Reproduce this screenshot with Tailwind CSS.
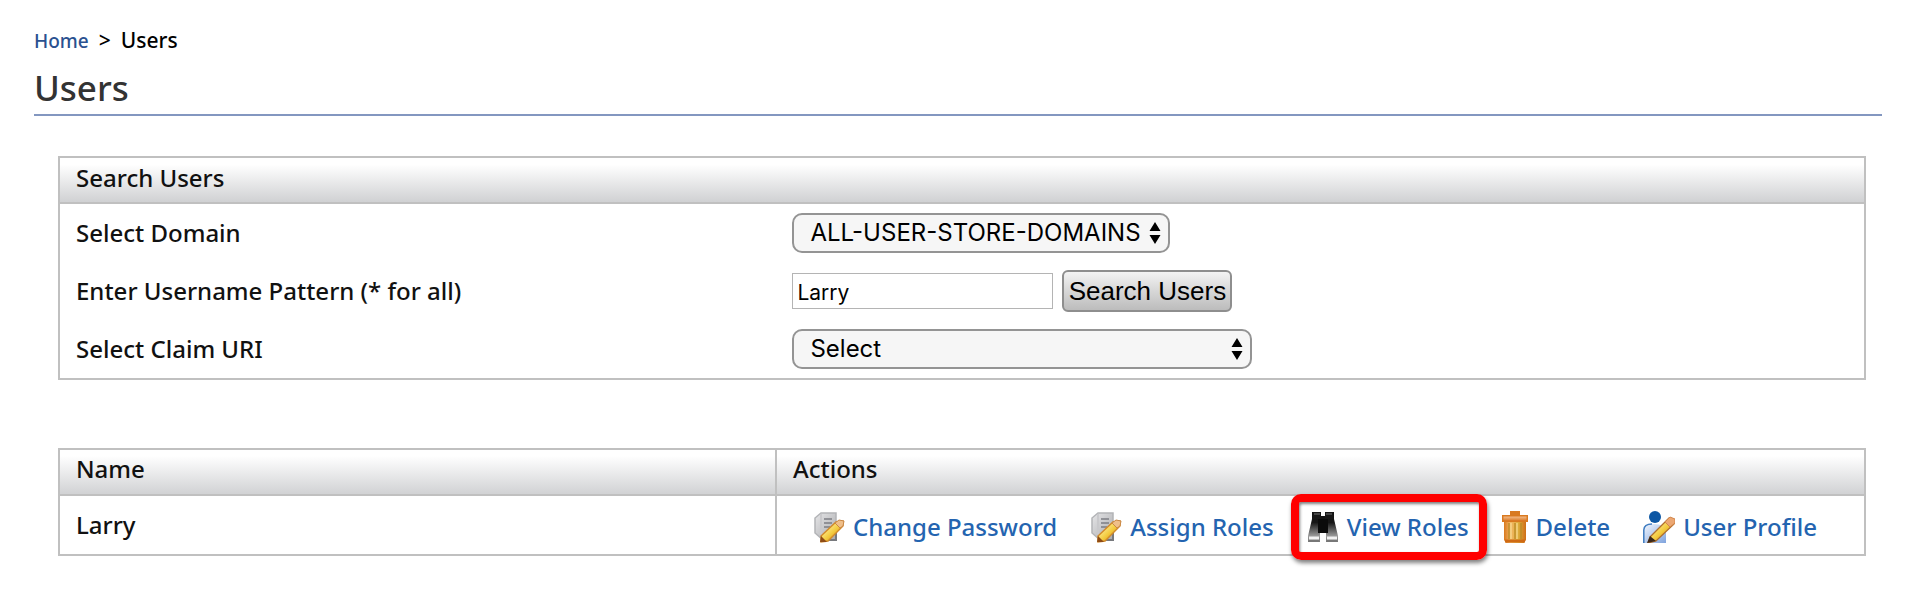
<!DOCTYPE html>
<html lang="en">
<head>
<meta charset="utf-8">
<meta name="viewport" content="width=device-width, initial-scale=1">
<title>Users</title>
<script src="https://cdn.jsdelivr.net/npm/@tailwindcss/browser@4"></script>
</head>
<body class="min-h-screen bg-white font-['Noto_Sans',sans-serif] text-2xl leading-8 font-medium text-[#111111]">
<svg class="absolute size-0" aria-hidden="true">
  <defs>
    <linearGradient id="paper" x1="0" x2="1" y2="1"><stop offset="0" stop-color="#e6e6e8"/><stop offset="1" stop-color="#a9aaad"/></linearGradient>
    <linearGradient id="pencil" x1="0" y1="0" x2="1" y2="1"><stop offset="0.2" stop-color="#fff3a0"/><stop offset="0.55" stop-color="#f3c93c"/><stop offset="0.9" stop-color="#c07818"/></linearGradient>
    <linearGradient id="barrel" x1="0" x2="0" y2="1"><stop offset="0" stop-color="#111"/><stop offset="0.35" stop-color="#161616"/><stop offset="0.8" stop-color="#9a9a9a"/><stop offset="1" stop-color="#777"/></linearGradient>
    <linearGradient id="bin" x1="0" x2="1"><stop offset="0" stop-color="#d9791f"/><stop offset="0.3" stop-color="#f3b765"/><stop offset="0.65" stop-color="#dcae3c"/><stop offset="1" stop-color="#cf6d16"/></linearGradient>
    <linearGradient id="lid" x1="0" x2="0" y2="1"><stop offset="0" stop-color="#f7c79a"/><stop offset="1" stop-color="#d8731c"/></linearGradient>
    <linearGradient id="shirt" x1="0" x2="1" y2="1"><stop offset="0" stop-color="#f4f8fe"/><stop offset="1" stop-color="#7fa3dd"/></linearGradient>
    <symbol id="edit" viewBox="0 0 32 32">
      <path d="M8 2H23V29H10L2 22V7Z" fill="url(#paper)" stroke="#b3b4b7" stroke-width="1.5"/>
      <path d="M8 3V22L11 28" fill="none" stroke="#c9c9cc" stroke-width="2"/>
      <path d="M11 8H19M11 12H19M11 16H17" stroke="#7c7e84" stroke-width="1.6"/>
      <path d="M23 18V29H15" fill="none" stroke="#77797d" stroke-width="2"/>
      <path d="M8 25L23 11L30 10L30 15L15 30L8 31Z" fill="url(#pencil)" stroke="#d28a2a" stroke-width="1.4"/>
      <path d="M22 12L26 9L31 10L30 15L27 17Z" fill="#efbf8a" stroke="#c98745"/>
      <path d="M8 25L14 31H7Z" fill="#8f4c16"/>
    </symbol>
    <symbol id="binoculars" viewBox="0 0 32 32">
      <path d="M5 1H14V5H18V1H27V8L31 25V31H19V21H13V31H1V25L5 8Z" fill="url(#barrel)"/>
      <path d="M6 1H14V8H6ZM18 1H26V8H18Z" fill="#171717"/>
      <path d="M7 3H13M19 3H25" stroke="#777" stroke-width="1.2"/>
      <path d="M11 8H21V22H11Z" fill="#0b0b0b"/>
      <path d="M2 27H12M20 27H30" stroke="#f2f2f2" stroke-width="3"/>
      <path d="M2 30H12M20 30H30" stroke="#777" stroke-width="2"/>
    </symbol>
    <symbol id="trash" viewBox="0 0 26 32">
      <path d="M8 0H18V4H8Z" fill="#d87a22"/>
      <path d="M2 10H24V29L22 32H4L2 29Z" fill="url(#bin)"/>
      <path d="M7 12V28M13 12V28M19 12V28" stroke="#b98a26" stroke-width="1.3"/>
      <path d="M9 12V28M15 12V28" stroke="#f6d98f" stroke-width="1.3"/>
      <path d="M3 30H23" stroke="#cf6a14" stroke-width="3"/>
      <path d="M0.7 4.7H25.3V10.3H0.7Z" fill="url(#lid)" stroke="#d9791f" stroke-width="1.4"/>
    </symbol>
    <symbol id="profile" viewBox="0 0 32 32">
      <path d="M0 32V19C1 13 6 13 11 13C18 13 23 16 23 22V32Z" fill="url(#shirt)"/>
      <path d="M0.8 32V19C1 14 5 13 9 13" fill="none" stroke="#3f7cc0" stroke-width="1.5"/>
      <circle cx="12" cy="6" r="6" fill="#0d57a4"/>
      <path d="M7 26L26 7L31 9L31 13L13 30L5 32Z" fill="url(#pencil)" stroke="#b06f2c" stroke-width="1.3"/>
      <path d="M22 11L27 6L32 8V12L27 16Z" fill="#eba773" stroke="#d2854a"/>
      <path d="M7 25L13 30L4 32Z" fill="#3a281c"/>
    </symbol>
    <symbol id="arrows" viewBox="0 0 12 22"><path d="M6 0L11.5 9H0.5ZM6 22L0.5 13H11.5Z" fill="#000"/></symbol>
  </defs>
</svg>

<div class="pt-6 pr-[30px] pb-8 pl-[34px]">
  <nav aria-label="Breadcrumb" class="flex items-baseline gap-2.5 text-[21px] text-black">
    <a href="#" class="text-[19px] text-[#2a5190]">Home</a><span>&gt;</span><span>Users</span>
  </nav>
  <h1 class="mt-2 border-b-2 border-[#8397c0] pb-[3px] text-[35px] leading-[46px] text-[#333333]">Users</h1>

  <main class="mt-10 mr-4 ml-6 space-y-[68px]">
    <form class="border-2 border-[#c0c0c0]" onsubmit="return false">
      <h2 class="h-[46px] border-b-2 border-[#c0c0c0] bg-linear-to-b from-white from-15% to-[#d0d1d3] px-4 pt-1">Search Users</h2>
      <div class="grid grid-cols-[40.6%_1fr] grid-rows-[57px_59px_58px] items-center">
        <label for="domain" class="pl-4">Select Domain</label>
        <div class="flex">
          <div class="relative">
            <select id="domain" class="h-10 w-[378px] appearance-none rounded-[10px] border-2 border-[#949494] bg-[#f6f6f6] pl-4 font-[Inter,sans-serif] text-2xl leading-8 font-normal text-black"><option>ALL-USER-STORE-DOMAINS</option></select>
            <svg class="pointer-events-none absolute top-[9px] right-[9px] h-[22px] w-3"><use href="#arrows"/></svg>
          </div>
        </div>
        <label for="pattern" class="pl-4">Enter Username Pattern (* for all)</label>
        <div class="flex items-center gap-[9px]">
          <input id="pattern" type="text" value="Larry" class="h-9 w-[261px] border border-[#b4b4b4] px-1 pt-1 font-[Inter,sans-serif] text-[21px] leading-8 font-normal text-black">
          <button type="submit" class="h-[42px] w-[170px] rounded-md border-2 border-[#8e8e8e] bg-linear-to-b from-[#f3f3f3] to-[#bcbcbc] text-center font-['Liberation_Sans',sans-serif] text-[26px] leading-9 font-normal whitespace-nowrap text-black">Search Users</button>
        </div>
        <label for="claim" class="pl-4">Select Claim URI</label>
        <div class="flex">
          <div class="relative">
            <select id="claim" class="h-10 w-[460px] appearance-none rounded-[10px] border-2 border-[#949494] bg-[#f6f6f6] pl-4 font-[Inter,sans-serif] text-2xl leading-8 font-normal text-black"><option>Select</option></select>
            <svg class="pointer-events-none absolute top-[9px] right-[9px] h-[22px] w-3"><use href="#arrows"/></svg>
          </div>
        </div>
      </div>
    </form>

    <table class="w-full border-collapse border-2 border-[#c0c0c0] text-left">
      <thead>
        <tr class="h-[46px] bg-linear-to-b from-white from-15% to-[#d0d1d3]">
          <th class="w-[39.7%] border-2 border-[#c0c0c0] px-4 pb-1.5 font-medium">Name</th>
          <th class="border-2 border-[#c0c0c0] px-4 pb-1.5 font-medium">Actions</th>
        </tr>
      </thead>
      <tbody>
        <tr class="h-[60px]">
          <td class="border-2 border-[#c0c0c0] px-4">Larry</td>
          <td class="border-2 border-[#c0c0c0] pt-1 pl-9">
            <div class="flex items-center gap-[33px] whitespace-nowrap text-[#2464b0]">
              <a href="#" class="flex items-center gap-2"><svg class="size-8"><use href="#edit"/></svg>Change Password</a>
              <a href="#" class="flex items-center gap-2"><svg class="size-8"><use href="#edit"/></svg>Assign Roles</a>
              <a href="#" class="relative flex items-center gap-2"><svg class="size-8"><use href="#binoculars"/></svg>View Roles
                <span class="absolute -inset-y-[17px] -right-[18px] -left-4 z-10 rounded-[10px] border-8 border-[#ff0000] shadow-[1px_3px_4px_rgba(0,0,0,0.5),inset_1px_2px_3px_rgba(0,0,0,0.5)]"></span></a>
              <a href="#" class="flex items-center gap-2"><svg class="h-8 w-[26px]"><use href="#trash"/></svg>Delete</a>
              <a href="#" class="flex items-center gap-2"><svg class="size-8"><use href="#profile"/></svg>User Profile</a>
            </div>
          </td>
        </tr>
      </tbody>
    </table>
  </main>
</div>
</body>
</html>
